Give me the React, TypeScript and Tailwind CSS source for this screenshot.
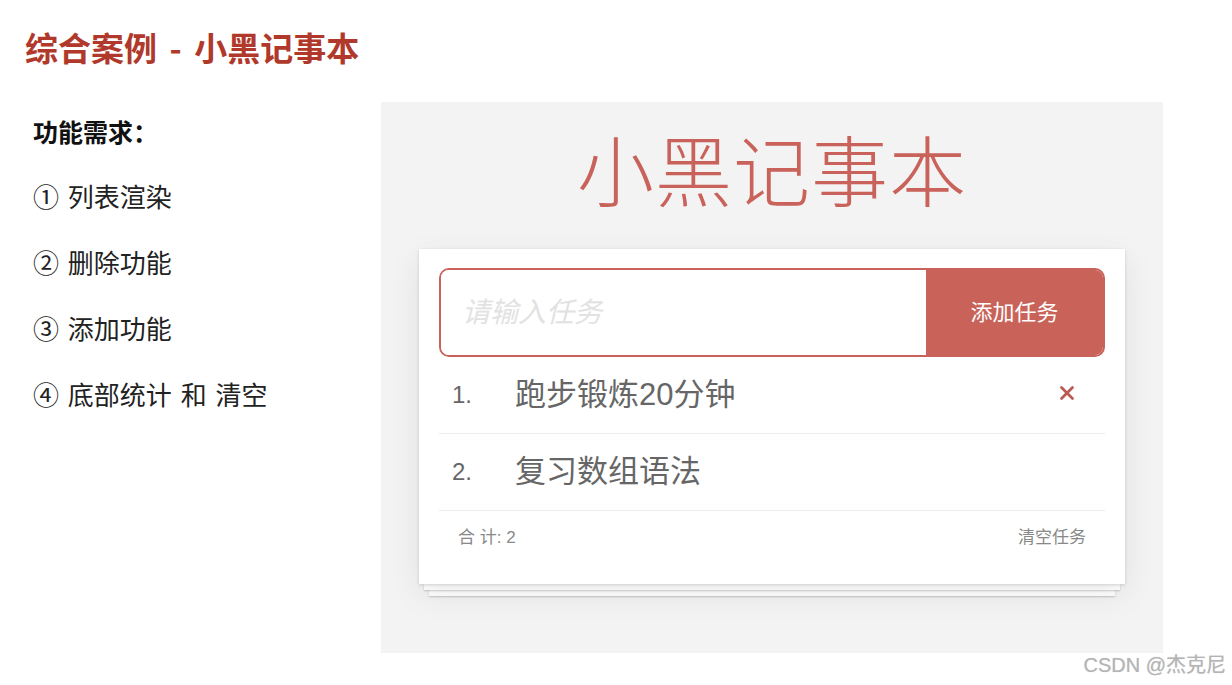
import { X } from 'lucide-react';

const features = ['① 列表渲染', '② 删除功能', '③ 添加功能', '④ 底部统计 和 清空'];

const todos = [
  { id: 1, name: '跑步锻炼20分钟' },
  { id: 2, name: '复习数组语法' },
];

export default function App() {
  return (
    <div className="relative w-[1232px] h-[685px] overflow-hidden bg-white font-['Liberation_Sans','Noto_Sans_CJK_SC',sans-serif]">
      {/* Slide title */}
      <h1 className="pl-[25px] pt-[29px] text-[33px] leading-[37px] font-bold text-[#b0392b] font-['Noto_Sans_CJK_SC',sans-serif] [word-spacing:5px]">
        综合案例 - 小黑记事本
      </h1>

      <div className="flex mt-[36px]">
        {/* Requirements */}
        <div className="w-[381px] pl-[33px] pt-[13px] font-['Noto_Sans_CJK_SC',sans-serif]">
          <div className="text-[25px] leading-[32px] font-bold text-[#111]">功能需求：</div>
          <ul className="mt-[31px] flex flex-col gap-[30px] [word-spacing:3px]">
            {features.map((f) => (
              <li key={f} className="text-[26px] leading-[36px] text-[#222]">
                {f}
              </li>
            ))}
          </ul>
        </div>

        {/* Demo panel */}
        <div className="w-[782px] h-[551px] bg-[#f4f3f3] flex flex-col items-center">
          <div className="mt-[34px] text-[77px] leading-[77px] font-light text-[#c9625a] tracking-[1px]">
            小黑记事本
          </div>

          <div className="mt-[36px] flex flex-col items-center">
            <div className="w-[706px] h-[335px] bg-white px-[20px] pt-[19px] shadow-[0_1px_3px_rgba(0,0,0,0.15),0_10px_30px_rgba(0,0,0,0.08)] relative z-20">
              {/* Input */}
              <div className="flex h-[89px] border-2 border-[#c9625a] rounded-[10px] overflow-hidden">
                <input
                  placeholder="请输入任务"
                  className="flex-1 pl-[21px] text-[28px] italic outline-none bg-white placeholder:text-[#e2e2e2]"
                />
                <button className="w-[177px] bg-[#c9635a] text-white text-[22px]">添加任务</button>
              </div>

              {/* List */}
              <ul>
                {todos.map((t, i) => (
                  <li
                    key={t.id}
                    className="flex items-center h-[77px] border-b border-[#ececec] text-[#666]"
                  >
                    <span className="w-[76px] pl-[13px] text-[24px]">{i + 1}.</span>
                    <span className="flex-1 text-[31px]">{t.name}</span>
                    {i === 0 && (
                      <X size={22} strokeWidth={3} className="mr-[27px] -mt-[4px] text-[#b85a52]" />
                    )}
                  </li>
                ))}
              </ul>

              {/* Footer */}
              <div className="flex justify-between items-center pl-[19px] pr-[19px] h-[54px] text-[17px] text-[#888]">
                <span>合 计: 2</span>
                <span>清空任务</span>
              </div>
            </div>
            <div className="w-[696px] h-[6px] bg-white shadow-[0_1px_2px_rgba(0,0,0,0.2)] relative z-10" />
            <div className="w-[686px] h-[6px] bg-white shadow-[0_1px_2px_rgba(0,0,0,0.2)]" />
          </div>
        </div>
      </div>

      <div className="absolute right-[6px] bottom-[8px] text-[20px] leading-[24px] text-[#b5b5b5] [text-shadow:0_0_1px_rgba(0,0,0,0.2)]">
        CSDN @杰克尼
      </div>
    </div>
  );
}
